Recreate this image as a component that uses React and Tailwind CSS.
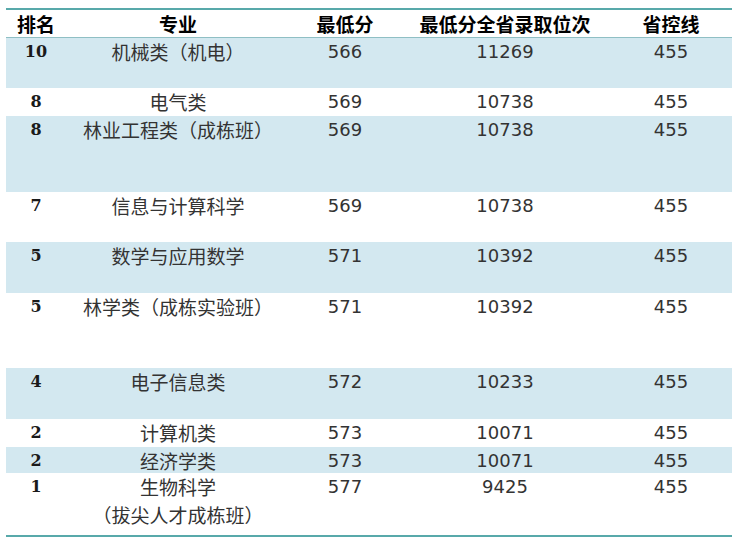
import React from "react";

const rows = [
  { r: "10", m: ["机械类（机电）"], s: "566", p: "11269", c: "455", h: "h-[50px]", blue: true },
  { r: "8", m: ["电气类"], s: "569", p: "10738", c: "455", h: "h-[28px]", blue: false },
  { r: "8", m: ["林业工程类（成栋班）"], s: "569", p: "10738", c: "455", h: "h-[76px]", blue: true },
  { r: "7", m: ["信息与计算科学"], s: "569", p: "10738", c: "455", h: "h-[50px]", blue: false },
  { r: "5", m: ["数学与应用数学"], s: "571", p: "10392", c: "455", h: "h-[51px]", blue: true },
  { r: "5", m: ["林学类（成栋实验班）"], s: "571", p: "10392", c: "455", h: "h-[75px]", blue: false },
  { r: "4", m: ["电子信息类"], s: "572", p: "10233", c: "455", h: "h-[51px]", blue: true },
  { r: "2", m: ["计算机类"], s: "573", p: "10071", c: "455", h: "h-[28px]", blue: false },
  { r: "2", m: ["经济学类"], s: "573", p: "10071", c: "455", h: "h-[26px]", blue: true },
  { r: "1", m: ["生物科学", "（拔尖人才成栋班）"], s: "577", p: "9425", c: "455", h: "h-[62px]", blue: false },
];

export default function App() {
  return (
    <div className="w-[738px] h-[542px] bg-white pt-[8px] pl-[6px]">
      <div className="w-[726px] border-t-2 border-b-2 border-[#58a9aa]">
        <div className="grid grid-cols-[60px_224px_110px_210px_122px] h-[28px] items-center border-b border-[#8fbfc4] text-[19px] font-bold text-black [font-family:'Noto_Sans_CJK_SC',sans-serif] leading-[28px] text-center">
          <div>排名</div>
          <div>专业</div>
          <div>最低分</div>
          <div>最低分全省录取位次</div>
          <div>省控线</div>
        </div>
        {rows.map((row, i) => (
          <div
            key={i}
            className={`grid grid-cols-[60px_224px_110px_210px_122px] ${row.h} ${row.blue ? "bg-[#d3e8f0]" : "bg-white"} text-center leading-[28px] text-[#333333]`}
          >
            <div className="[font-family:'DejaVu_Serif',serif] font-bold text-[16px] text-[#1a1a1a]">{row.r}</div>
            <div className="[font-family:'Noto_Sans_CJK_SC',sans-serif] text-[19px] [text-spacing-trim:space-all]">
              {row.m.map((t, j) => (
                <div key={j}>{t}</div>
              ))}
            </div>
            <div className="[font-family:'DejaVu_Sans',sans-serif] text-[18px]">{row.s}</div>
            <div className="[font-family:'DejaVu_Sans',sans-serif] text-[18px]">{row.p}</div>
            <div className="[font-family:'DejaVu_Sans',sans-serif] text-[18px]">{row.c}</div>
          </div>
        ))}
      </div>
    </div>
  );
}
